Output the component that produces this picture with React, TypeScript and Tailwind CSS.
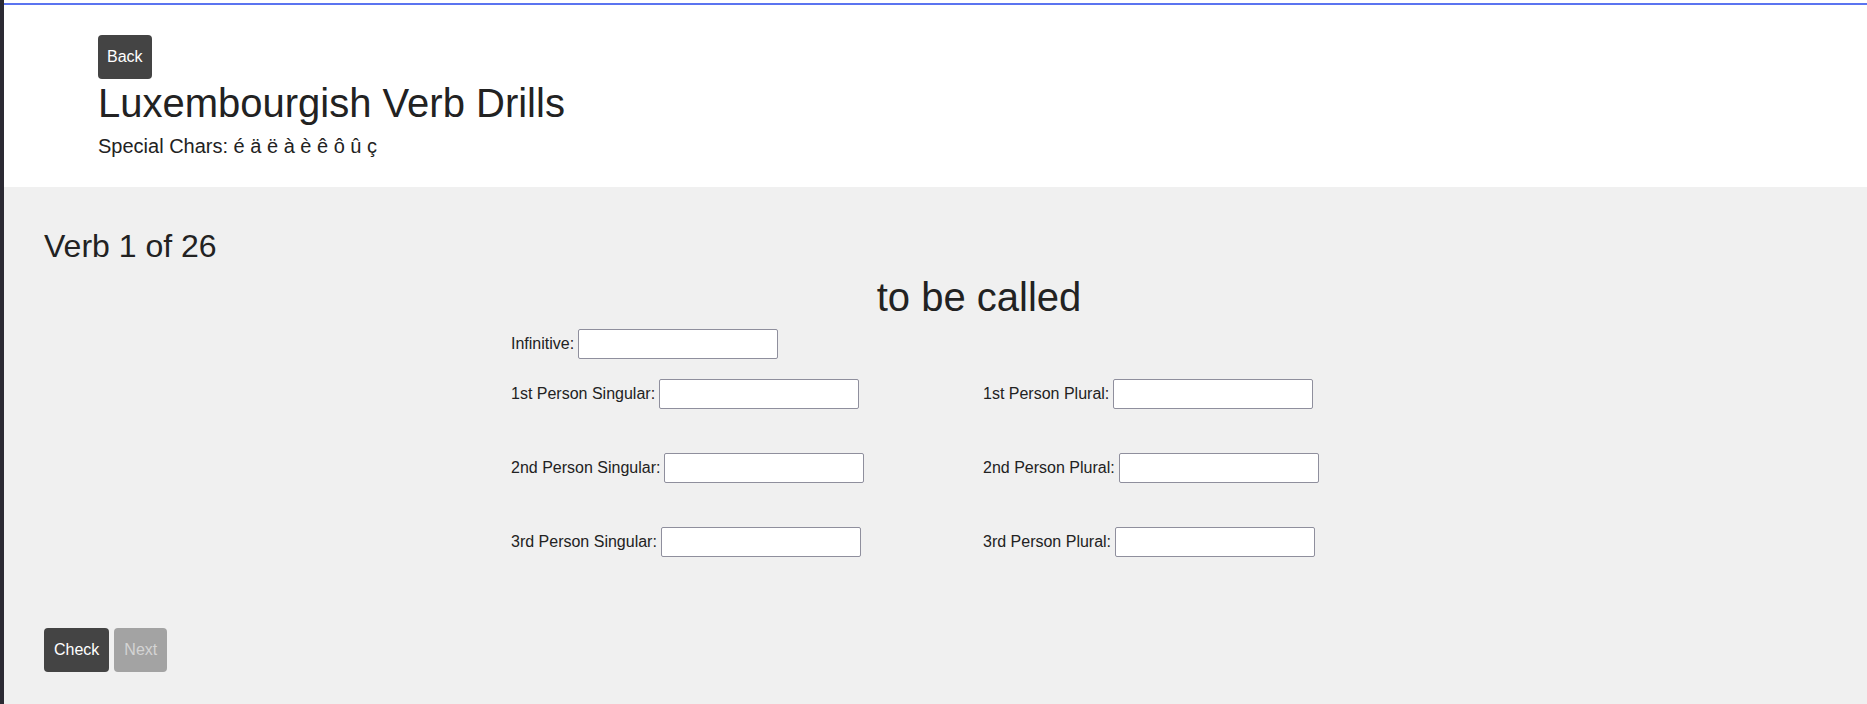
import React from "react";

const font = { fontFamily: '"Liberation Sans", Arial, sans-serif' };

function Field({ label }: { label: string }) {
  return (
    <div className="flex items-center gap-[4px]">
      <label className="text-[16px] leading-[18px] text-[#222]">{label}</label>
      <input
        type="text"
        className="w-[200px] h-[30px] bg-white border border-[#8f8f9d] rounded-[2px] outline-none px-1 text-[16px]"
      />
    </div>
  );
}

export default function App() {
  return (
    <div className="flex min-h-[704px] bg-[#f0f0f0]" style={font}>
      <div className="w-[4px] shrink-0 bg-[#2b2a33]" />
      <div className="flex flex-1 flex-col">
        <header className="bg-white pt-[3px]">
          <div className="border-t-2 border-[#5b74f0] pl-[94px] pt-[30px] pb-[29px]">
            <button className="h-[44px] px-[9px] rounded-[4px] bg-[#444] text-white text-[16px]">
              Back
            </button>
            <h1 className="text-[40px] leading-[48px] text-[#222] font-normal">
              Luxembourgish Verb Drills
            </h1>
            <p className="mt-[7px] text-[20px] leading-[24px] text-[#222]">
              Special Chars: é ä ë à è ê ô û ç
            </p>
          </div>
        </header>
        <main className="flex-1 bg-[#f0f0f0] pl-[40px] pt-[40px]">
          <h2 className="text-[32px] leading-[38px] text-[#222] font-normal">Verb 1 of 26</h2>
          <div className="ml-[467px] w-[936px] mt-[8px]">
            <h3 className="text-center text-[40px] leading-[48px] text-[#222] font-normal">
              to be called
            </h3>
            <div className="mt-[8px]">
              <Field label="Infinitive:" />
            </div>
            <div className="mt-[20px] grid grid-cols-[472px_1fr] gap-y-[44px]">
              <Field label="1st Person Singular:" />
              <Field label="1st Person Plural:" />
              <Field label="2nd Person Singular:" />
              <Field label="2nd Person Plural:" />
              <Field label="3rd Person Singular:" />
              <Field label="3rd Person Plural:" />
            </div>
          </div>
          <div className="mt-[71px] flex gap-[5px]">
            <button className="h-[44px] px-[10px] rounded-[4px] bg-[#444] text-white text-[16px]">
              Check
            </button>
            <button
              disabled
              className="h-[44px] px-[10px] rounded-[4px] bg-[#a3a3a3] text-[#d4d4d4] text-[16px]"
            >
              Next
            </button>
          </div>
        </main>
      </div>
    </div>
  );
}
